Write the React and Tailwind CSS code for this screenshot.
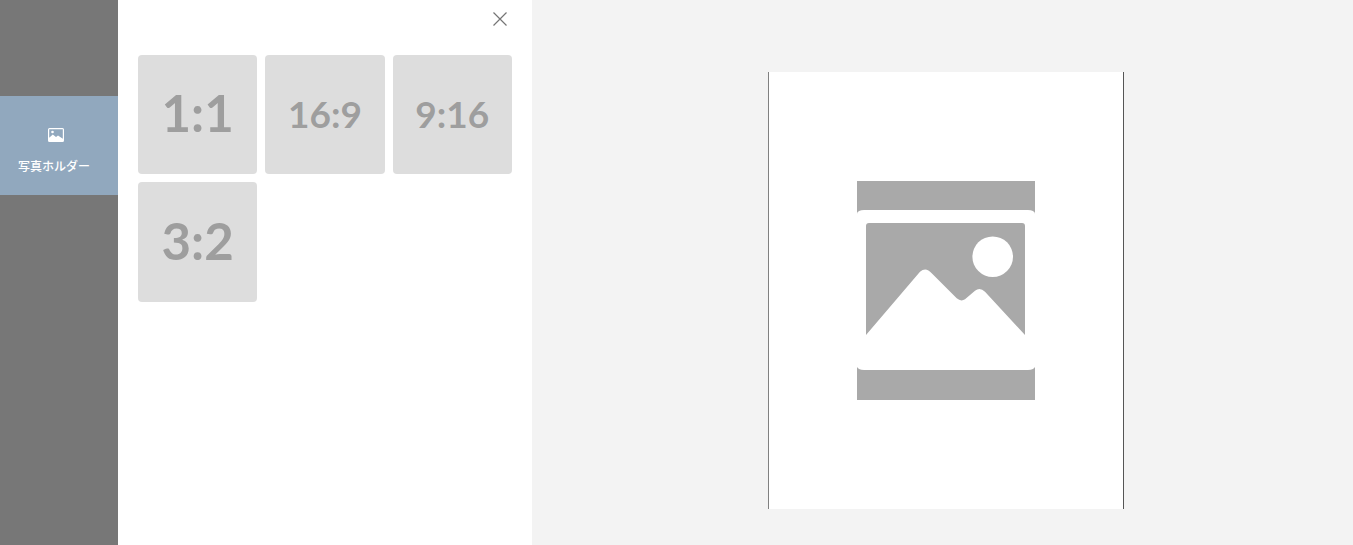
const ratios = [
  { label: '1:1', size: 'text-[51px]' },
  { label: '16:9', size: 'text-[37px]' },
  { label: '9:16', size: 'text-[37px]' },
  { label: '3:2', size: 'text-[51px]' },
];

function SmallImageIcon() {
  return (
    <svg width="16" height="14" viewBox="0 0 16 14" className="block">
      <path
        fill="#fff"
        fillRule="evenodd"
        d="M1.500 0h13A1.500 1.500 0 0 1 16 1.500v11a1.500 1.500 0 0 1-1.500 1.500h-13A1.500 1.500 0 0 1 0 12.500v-11A1.500 1.500 0 0 1 1.500 0zM1.200 1.200v8.600l3.600-3.300 3.200 2.500 2-1.500 4.800 3.300V1.200z"
      />
      <circle cx="4.500" cy="4" r="1.300" fill="#fff" />
    </svg>
  );
}

function PlaceholderIcon() {
  return (
    <svg width="178" height="219" viewBox="0 0 178 219" className="block">
      <rect width="178" height="219" fill="#a9a9a9" />
      <rect y="29" width="178" height="160" rx="7" ry="3.500" fill="#fff" />
      <path
        fill="#a9a9a9"
        d="M9 154L63 90.700Q69 85.500 74.700 92.300L99.700 117.300Q104 121 108 118.300L118 109.700Q123 106 128 110.700L168 154V45a3 3 0 0 0-3-3H12a3 3 0 0 0-3 3z"
      />
      <circle cx="135.700" cy="75.700" r="20.300" fill="#fff" />
    </svg>
  );
}

export default function App() {
  return (
    <div className="flex h-[545px] w-full overflow-hidden font-['Lato',sans-serif]">
      <aside className="w-[118px] shrink-0 bg-[#777777] pt-[96px]">
        <div className="flex h-[99px] flex-col items-center bg-[#91a8be] pt-[32px] pr-[6px] text-white">
          <SmallImageIcon />
          <span className="mt-[16px] whitespace-nowrap pr-[4px] font-['Noto_Sans_CJK_JP',sans-serif] text-[12px] leading-[16px] font-medium">
            写真ホルダー
          </span>
        </div>
      </aside>

      <section className="w-[414px] shrink-0 bg-white px-[20px]">
        <div className="flex h-[55px] justify-end pt-[12px] pr-[5px]">
          <button className="block h-[14px] w-[14px]">
            <svg width="14" height="14" viewBox="0 0 14 14" className="block">
              <path d="M0.500 0.500l13 13M13.500 0.500l-13 13" stroke="#757575" strokeWidth="1.200" fill="none" />
            </svg>
          </button>
        </div>
        <div className="grid grid-cols-3 gap-[8px]">
          {ratios.map((r) => (
            <div
              key={r.label}
              className={`flex aspect-square items-center justify-center rounded-[4px] bg-[#dddddd] pb-[2px] font-bold text-[#9e9e9e] ${r.size}`}
            >
              {r.label}
            </div>
          ))}
        </div>
      </section>

      <main className="flex flex-1 justify-center bg-[#f3f3f3] pt-[72px] pb-[36px] pl-[7px]">
        <div className="flex w-[356px] items-center justify-center border-r border-l border-r-[#555555] border-l-[#808080] bg-white">
          <PlaceholderIcon />
        </div>
      </main>
    </div>
  );
}
